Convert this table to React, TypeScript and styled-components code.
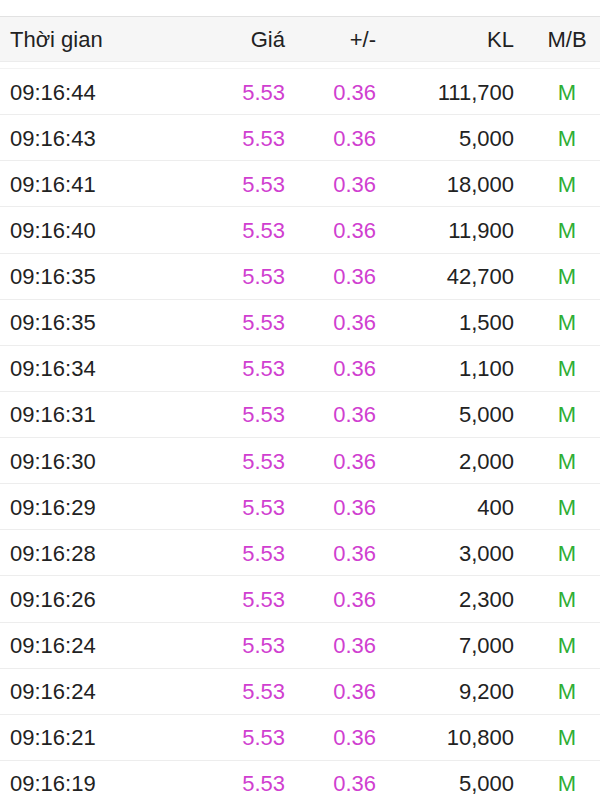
import * as React from 'react';
import styled, { createGlobalStyle } from 'styled-components';

const GlobalStyle = createGlobalStyle`
  html, body {
    margin: 0;
    padding: 0;
    background: #ffffff;
  }
  body {
    font-family: 'Liberation Sans', Arial, Helvetica, sans-serif;
    -webkit-font-smoothing: antialiased;
  }
`;

type Trade = { time: string; price: string; change: string; volume: string; side: string };

const trades: Trade[] = [
  { time: '09:16:44', price: '5.53', change: '0.36', volume: '111,700', side: 'M' },
  { time: '09:16:43', price: '5.53', change: '0.36', volume: '5,000', side: 'M' },
  { time: '09:16:41', price: '5.53', change: '0.36', volume: '18,000', side: 'M' },
  { time: '09:16:40', price: '5.53', change: '0.36', volume: '11,900', side: 'M' },
  { time: '09:16:35', price: '5.53', change: '0.36', volume: '42,700', side: 'M' },
  { time: '09:16:35', price: '5.53', change: '0.36', volume: '1,500', side: 'M' },
  { time: '09:16:34', price: '5.53', change: '0.36', volume: '1,100', side: 'M' },
  { time: '09:16:31', price: '5.53', change: '0.36', volume: '5,000', side: 'M' },
  { time: '09:16:30', price: '5.53', change: '0.36', volume: '2,000', side: 'M' },
  { time: '09:16:29', price: '5.53', change: '0.36', volume: '400', side: 'M' },
  { time: '09:16:28', price: '5.53', change: '0.36', volume: '3,000', side: 'M' },
  { time: '09:16:26', price: '5.53', change: '0.36', volume: '2,300', side: 'M' },
  { time: '09:16:24', price: '5.53', change: '0.36', volume: '7,000', side: 'M' },
  { time: '09:16:24', price: '5.53', change: '0.36', volume: '9,200', side: 'M' },
  { time: '09:16:21', price: '5.53', change: '0.36', volume: '10,800', side: 'M' },
  { time: '09:16:19', price: '5.53', change: '0.36', volume: '5,000', side: 'M' },
];

export default function App() {
  return (
    <>
      <GlobalStyle />
      <Screen>
        <HeaderRow>
          <Cell align="left">Thời gian</Cell>
          <Cell align="right">Giá</Cell>
          <Cell align="right">+/-</Cell>
          <Cell align="right">KL</Cell>
          <Cell align="center">M/B</Cell>
        </HeaderRow>
        <Body>
          {trades.map((t, i) => (
            <Row key={i}>
              <Cell align="left">{t.time}</Cell>
              <Cell align="right" tone="up">{t.price}</Cell>
              <Cell align="right" tone="up">{t.change}</Cell>
              <Cell align="right">{t.volume}</Cell>
              <Cell align="center" tone="buy">{t.side}</Cell>
            </Row>
          ))}
        </Body>
      </Screen>
    </>
  );
}

const toneColors: Record<string, string> = {
  up: '#d03fd0',
  buy: '#2fae35',
  base: '#222222',
};

const Screen = styled.div`
  width: 600px;
  height: 800px;
  overflow: hidden;
  background: #ffffff;
  padding-top: 16px;
  box-sizing: border-box;
`;

const columns = `
  display: grid;
  grid-template-columns: 170px 105px 91px 138px 1fr;
  align-items: center;
  padding-left: 10px;
  padding-top: 2px;
  box-sizing: border-box;
`;

const HeaderRow = styled.div`
  ${columns}
  height: 46px;
  background: #f6f6f6;
  border-top: 1px solid #e2e2e2;
  border-bottom: 1px solid #ececec;
`;

const Body = styled.div`
  margin-top: 6px;
  border-top: 1px solid #f3f3f3;
`;

const Row = styled.div`
  ${columns}
  height: 46.13px;
  border-bottom: 1px solid #ededed;
`;

const Cell = styled.div<{ align: 'left' | 'right' | 'center'; tone?: string }>`
  font-size: 22px;
  line-height: 26px;
  color: ${({ tone }) => toneColors[tone || 'base']};
  text-align: ${({ align }) => align};
  white-space: nowrap;
  padding-left: ${({ align }) => (align === 'center' ? '20px' : '0')};
`;
